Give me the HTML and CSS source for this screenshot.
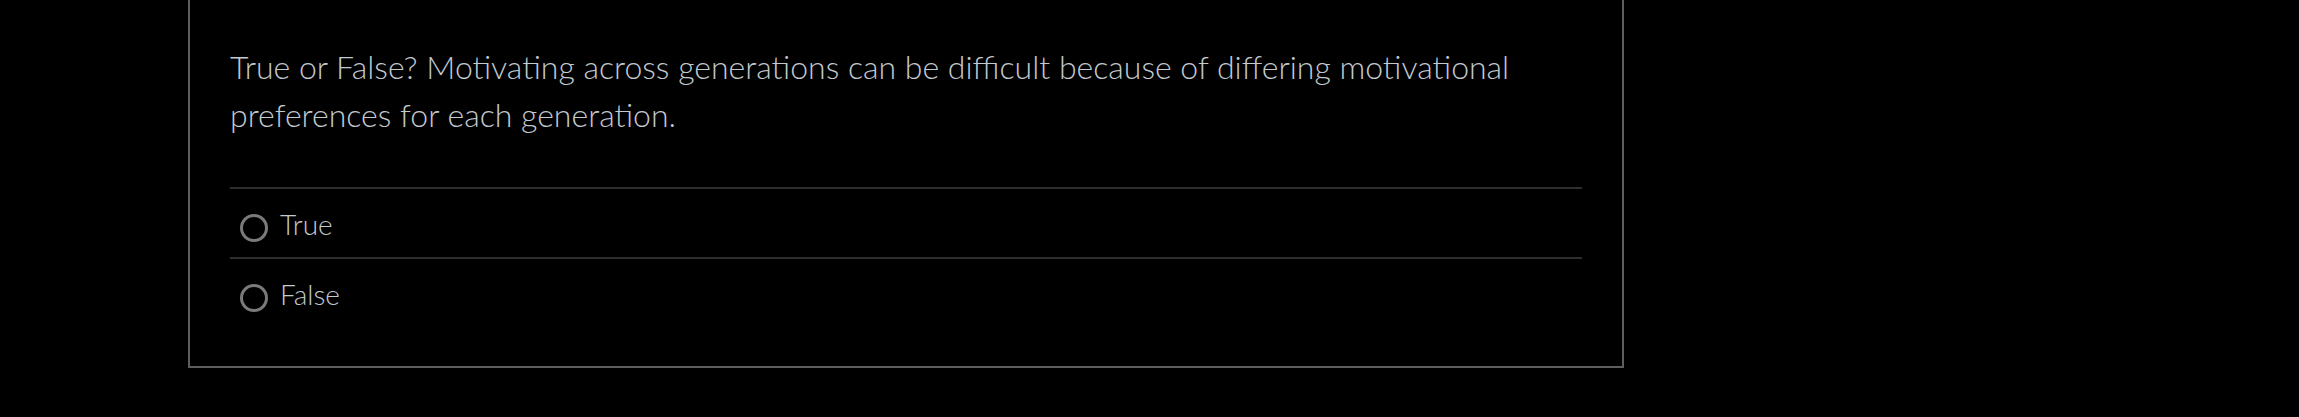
FILE: index.html
```html
<!DOCTYPE html>
<html lang="en">
<head>
<meta charset="utf-8">
<title>Quiz question</title>
<link rel="stylesheet" href="styles.css">
</head>
<body>
<div class="page">
  <div class="question-card">
    <div class="question-text">True or False? Motivating across generations can be difficult because of differing motivational preferences for each generation.</div>
    <div class="answers">
      <label class="answer">
        <span class="radio"></span>
        <span class="answer-text">True</span>
      </label>
      <label class="answer">
        <span class="radio"></span>
        <span class="answer-text">False</span>
      </label>
    </div>
  </div>
</div>
</body>
</html>
```
FILE: styles.css
```css
html, body {
  margin: 0;
  padding: 0;
  background: #000;
}
body {
  font-family: Lato, "Open Sans", sans-serif;
  font-weight: 300;
  color: #c2c9cf;
}
.page {
  padding-left: 188px;
}
.question-card {
  box-sizing: border-box;
  width: 1436px;
  height: 368px;
  border: 2px solid #5e5e5e;
  border-top: 0;
  padding: 0 40px;
}
.question-text {
  padding-top: 43px;
  font-size: 32px;
  line-height: 48px;
  max-width: 1300px;
}
.answers {
  margin-top: 48px;
}
.answer {
  display: flex;
  align-items: center;
  border-top: 2px solid #2e2e2e;
  padding: 12px 0 2px 10px;
  height: 54px;
}
.radio {
  width: 28px;
  height: 28px;
  box-sizing: border-box;
  border: 3px solid #7a7a7a;
  border-radius: 50%;
  flex: none;
}
.answer-text {
  margin-left: 12px;
  font-size: 28px;
  line-height: 28px;
  padding-bottom: 8px;
}
```
